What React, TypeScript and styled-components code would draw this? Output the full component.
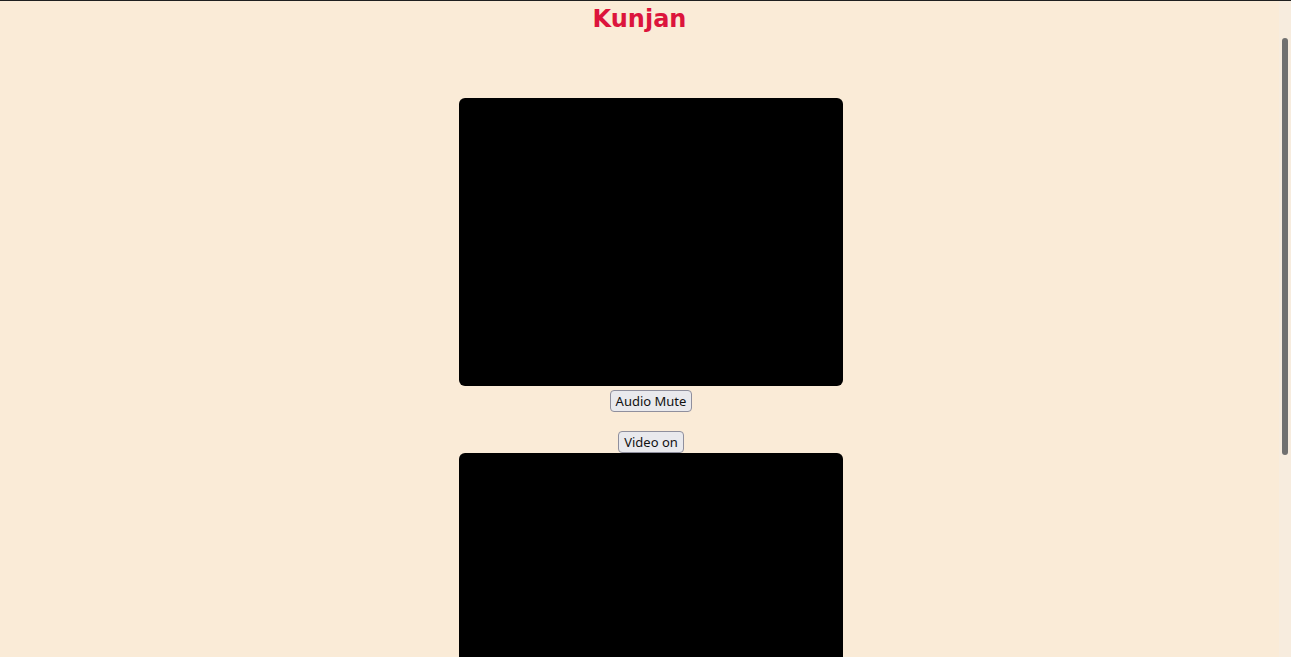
import React from "react";
import styled, { createGlobalStyle } from "styled-components";

const Global = createGlobalStyle`
  html, body { margin: 0; padding: 0; background: #faebd7; overflow: hidden; }
  body { font-family: "Noto Sans", "DejaVu Sans", sans-serif; }
`;

const Page = styled.div`
  display: flex;
  flex-direction: column;
  height: 657px;
  box-sizing: border-box;
  padding-right: 12px;
  border-top: 1px solid #1f1f1f;
  overflow: hidden;
`;

const Title = styled.h1`
  margin: 0;
  padding-top: 4px;
  text-align: center;
  font-family: "DejaVu Sans", sans-serif;
  font-weight: 700;
  font-size: 24px;
  line-height: 28px;
  color: #dc143c;
`;

const Stage = styled.main`
  display: flex;
  flex-direction: column;
  align-items: center;
  padding-top: 65px;
  padding-left: 23px;
`;

const Video = styled.div`
  flex: none;
  width: 384px;
  height: 288px;
  background: #000;
  border-radius: 6px;
`;

const Control = styled.button<{ $gap: number }>`
  flex: none;
  margin-top: ${(p) => p.$gap}px;
  font-family: "Noto Sans", "DejaVu Sans", sans-serif;
  font-size: 13px;
  line-height: 18px;
  padding: 1px 5px;
  color: #111;
  background: #e9e9ed;
  border: 1px solid #8f8f9d;
  border-radius: 4px;
`;

const ScrollTrack = styled.div`
  position: fixed;
  top: 1px;
  right: 0;
  width: 12px;
  height: 656px;
  background: #f7ecde;
`;

const ScrollThumb = styled.div`
  position: absolute;
  top: 37px;
  left: 3px;
  width: 6px;
  height: 417px;
  border-radius: 3px;
  background: #707070;
`;

export default function App() {
  return (
    <>
      <Global />
      <Page>
        <Title>Kunjan</Title>
        <Stage>
          <Video />
          <Control $gap={4}>Audio Mute</Control>
          <Control $gap={19}>Video on</Control>
          <Video />
        </Stage>
      </Page>
      <ScrollTrack>
        <ScrollThumb />
      </ScrollTrack>
    </>
  );
}
